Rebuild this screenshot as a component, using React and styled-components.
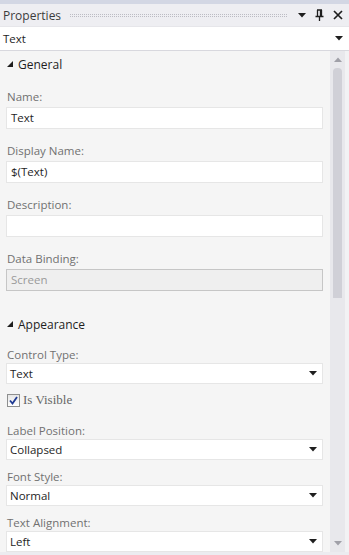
import styled, {createGlobalStyle} from "styled-components";

const GlobalStyle = createGlobalStyle`
    html, body {
        margin: 0;
        padding: 0;
        background: #f5f5f5;
    }
    body {
        font-family: "Open Sans", "Noto Sans", sans-serif;
        font-size: 11.5px;
        color: #1e1e1e;
    }
`

const Caret = ({color = "#1e1e1e"}) => (
    <svg width="8" height="5" viewBox="0 0 8 5">
        <path d="M0 0 H8 L4 4.5 Z" fill={color}/>
    </svg>
)

const ExpandedMark = () => (
    <svg width="6" height="6" viewBox="0 0 6 6">
        <path d="M6 0 V6 H0 Z" fill="#1e1e1e"/>
    </svg>
)

const PinIcon = () => (
    <svg width="9" height="12" viewBox="0 0 9 12">
        <path d="M2 1 H7 M2.5 1 V7 M6.5 1 V7 M5.5 1.5 V7 M0.5 7.5 H8.5 M4.5 7.5 V12" stroke="#1e1e1e" strokeWidth="1.3" fill="none"/>
    </svg>
)

const CloseIcon = () => (
    <svg width="10" height="10" viewBox="0 0 10 10">
        <path d="M1 1 L9 9 M9 1 L1 9" stroke="#1e1e1e" strokeWidth="1.7"/>
    </svg>
)

const CheckMark = () => (
    <svg width="9" height="9" viewBox="0 0 9 9">
        <path d="M1 4.5 L3.5 7.5 L8 1" stroke="#1f3a93" strokeWidth="1.8" fill="none"/>
    </svg>
)

function TextField({label, value, disabled}) {
    return (
        <Field>
            <Label>{label}</Label>
            <Input $disabled={disabled}>{value}</Input>
        </Field>
    )
}

function SelectField({label, value}) {
    return (
        <SelectBlock>
            <Label>{label}</Label>
            <Select>
                <span>{value}</span>
                <Caret/>
            </Select>
        </SelectBlock>
    )
}

export default function App() {
    return (
        <Panel>
            <GlobalStyle/>
            <TopBand/>
            <TitleBar>
                <Title>Properties</Title>
                <Grip/>
                <TitleButtons>
                    <Caret/>
                    <PinIcon/>
                    <CloseIcon/>
                </TitleButtons>
            </TitleBar>
            <ObjectPicker>
                <span>Text</span>
                <Caret/>
            </ObjectPicker>
            <Body>
                <Content>
                    <Section>
                        <SectionHeader><ExpandedMark/>General</SectionHeader>
                        <TextField label="Name:" value="Text"/>
                        <TextField label="Display Name:" value="$(Text)"/>
                        <TextField label="Description:" value=""/>
                        <TextField label="Data Binding:" value="Screen" disabled/>
                    </Section>
                    <Section>
                        <SectionHeader $next><ExpandedMark/>Appearance</SectionHeader>
                        <SelectField label="Control Type:" value="Text"/>
                        <CheckRow>
                            <CheckBox><CheckMark/></CheckBox>
                            <CheckLabel>Is Visible</CheckLabel>
                        </CheckRow>
                        <SelectField label="Label Position:" value="Collapsed"/>
                        <SelectField label="Font Style:" value="Normal"/>
                        <SelectField label="Text Alignment:" value="Left"/>
                    </Section>
                </Content>
                <ScrollBar>
                    <ArrowSlot><Caret color="#a0a0a8"/></ArrowSlot>
                    <Track>
                        <Thumb/>
                    </Track>
                    <ArrowSlot><Caret color="#a0a0a8"/></ArrowSlot>
                </ScrollBar>
                <RightEdge/>
            </Body>
        </Panel>
    )
}

const Panel = styled.div`
    width: 349px;
    height: 555px;
    display: flex;
    flex-direction: column;
    overflow: hidden;
    background: #f5f5f5;
`

const TopBand = styled.div`
    height: 4px;
    background: #d3d7e4;
`

const TitleBar = styled.div`
    height: 22px;
    display: flex;
    align-items: center;
    gap: 6px;
    padding: 0 6px 0 3px;
    background: #eeeef2;
`

const Title = styled.span`
    color: #3c3c3c;
    font-size: 12px;
`

const Grip = styled.div`
    flex: 1;
    height: 5px;
    margin-left: 2px;
    background:
        repeating-linear-gradient(90deg, #eeeef2 0 1px, transparent 1px 2px),
        repeating-linear-gradient(0deg, #eeeef2 0 1px, #bcbcc4 1px 2px);
`

const TitleButtons = styled.div`
    display: flex;
    align-items: center;
    gap: 9px;
    margin-left: 4px;
`

const ObjectPicker = styled.div`
    height: 23px;
    display: flex;
    align-items: center;
    justify-content: space-between;
    padding: 0 6px 0 3px;
    background: #ffffff;
    border-top: 1px solid #e6e6ea;
    border-bottom: 1px solid #d8d8de;
`

const Body = styled.div`
    flex: 1;
    display: flex;
    overflow: hidden;
    border-bottom: 3px solid #ececf0;
`

const Content = styled.div`
    flex: 1;
    padding: 0 7px 0 6px;
    overflow: hidden;
`

const Section = styled.div`
    display: flex;
    flex-direction: column;
`

const SectionHeader = styled.div`
    height: 26px;
    display: flex;
    align-items: center;
    gap: 5px;
    padding-left: 1px;
    margin: ${p => p.$next ? "7px 0 9px" : "0 0 11px"};
    font-size: 12px;
    color: #1e1e1e;
`

const Field = styled.div`
    display: flex;
    flex-direction: column;
    gap: 2px;
    margin-bottom: 13px;
`

const SelectBlock = styled.div`
    display: flex;
    flex-direction: column;
    margin-bottom: 8px;
`

const Label = styled.div`
    height: 17px;
    line-height: 17px;
    padding-left: 1px;
    color: #717171;
`

const Input = styled.div`
    height: 20px;
    line-height: 20px;
    padding: 0 4px;
    border: 1px solid ${p => p.$disabled ? "#c6c6c6" : "#e6e6e6"};
    background: ${p => p.$disabled ? "#efefef" : "#ffffff"};
    color: ${p => p.$disabled ? "#9a9a9a" : "#1e1e1e"};
`

const Select = styled.div`
    height: 19px;
    display: flex;
    align-items: center;
    justify-content: space-between;
    padding: 0 5px 0 3px;
    border: 1px solid #e6e6e6;
    background: #ffffff;
`

const CheckRow = styled.div`
    height: 16px;
    display: flex;
    align-items: center;
    gap: 3px;
    padding-left: 1px;
    margin: 0 0 14px;
`

const CheckBox = styled.div`
    width: 11px;
    height: 11px;
    display: flex;
    align-items: center;
    justify-content: center;
    border: 1px solid #8e8f8f;
    background: linear-gradient(#e6e6e6, #ffffff);
`

const CheckLabel = styled.span`
    font-family: "Liberation Serif", serif;
    font-size: 13px;
    color: #666666;
`

const ScrollBar = styled.div`
    width: 15px;
    display: flex;
    flex-direction: column;
    background: #e8e8ec;
`

const ArrowSlot = styled.div`
    height: 17px;
    display: flex;
    align-items: center;
    justify-content: center;

    &:first-child svg {
        transform: rotate(180deg);
    }
`

const Track = styled.div`
    flex: 1;
    padding: 0 3px;
`

const Thumb = styled.div`
    height: 230px;
    background: #d0d0d7;
    border-radius: 4px 4px 0 0;
`

const RightEdge = styled.div`
    width: 4px;
    background: #f2f2f4;
`
